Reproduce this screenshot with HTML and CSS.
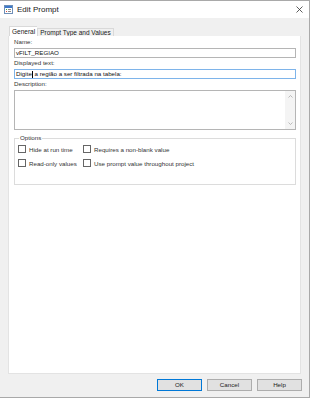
FILE: index.html
```html
<!doctype html>
<html>
<head>
<meta charset="utf-8">
<title>Edit Prompt</title>
<link rel="stylesheet" href="styles.css">
</head>
<body>
<div class="dialog">
	<div class="titlebar">
		<svg class="appicon" width="9" height="9" viewBox="0 0 9 9">
			<rect x="0.5" y="0.5" width="8" height="8" fill="#fff" stroke="#6f8fb8"/>
			<rect x="1" y="1" width="7" height="2" fill="#3d79c9"/>
			<rect x="2" y="4" width="1" height="1" fill="#3aa64a"/>
			<rect x="4" y="4" width="3" height="1" fill="#8a8a8a"/>
			<rect x="2" y="6" width="1" height="1" fill="#d9463b"/>
			<rect x="4" y="6" width="3" height="1" fill="#8a8a8a"/>
		</svg>
		<span class="title">Edit Prompt</span>
		<svg class="close" width="7" height="7" viewBox="0 0 7 7">
			<path d="M0.5 0.5L6.5 6.5M6.5 0.5L0.5 6.5" stroke="#333" stroke-width="0.8"/>
		</svg>
	</div>
	<div class="tabs">
		<span class="tab active">General</span>
		<span class="tab">Prompt Type and Values</span>
	</div>
	<div class="panel">
		<div class="label">Name:</div>
		<div class="input">vFILT_REGIAO</div>
		<div class="label">Displayed text:</div>
		<div class="input focus">Digite<i class="caret"></i> a região a ser filtrada na tabela:</div>
		<div class="label">Description:</div>
		<div class="textarea">
			<div class="area"></div>
			<div class="scroll">
				<svg width="5" height="3" viewBox="0 0 5 3"><path d="M0.5 2.5L2.5 0.5L4.5 2.5" fill="none" stroke="#a0a0a0" stroke-width="0.7"/></svg>
				<svg width="5" height="3" viewBox="0 0 5 3"><path d="M0.5 0.5L2.5 2.5L4.5 0.5" fill="none" stroke="#a0a0a0" stroke-width="0.7"/></svg>
			</div>
		</div>
		<fieldset class="group">
			<legend>Options</legend>
			<div class="checks">
				<label class="check"><i class="box"></i>Hide at run time</label>
				<label class="check"><i class="box"></i>Requires a non-blank value</label>
				<label class="check"><i class="box"></i>Read-only values</label>
				<label class="check"><i class="box"></i>Use prompt value throughout project</label>
			</div>
		</fieldset>
	</div>
	<div class="buttons">
		<span class="btn default">OK</span>
		<span class="btn">Cancel</span>
		<span class="btn">Help</span>
	</div>
</div>
</body>
</html>
```
FILE: styles.css
```css
*{ margin:0; padding:0; box-sizing:border-box;}
body{ background:#fff; font-family:"Liberation Sans", Arial, sans-serif; font-size:6.2px; color:#1a1a1a;}

.dialog{ width:310px; height:398px; border:1px solid #a9a9a9; border-left:none; background:#f0f0f0; display:flex; flex-direction:column;}

.titlebar{ height:17px; background:#fff; display:flex; align-items:center; padding:0 0 0 4px;}
.appicon{ display:block;}
.title{ font-size:8px; color:#222; margin-left:4px; flex:1;}
.close{ display:block; margin-right:6px;}

.tabs{ display:flex; align-items:flex-end; height:18px; padding-left:9px;}
.tab{ height:8px; line-height:8px; padding:0 2px; background:#f0f0f0; border:1px solid #d9d9d9; border-bottom:none; color:#1a1a1a; font-size:6.5px;}
.tab.active{ height:10px; line-height:9px; background:#fff; border-right:none;}

.panel{ flex:1; background:#fff; margin:0 8px 0 8px; padding:1px 4px 0 5px; border:1px solid #e3e3e3; border-top:none;}

.label{ height:11px; line-height:10px; color:#333;}
.input{ height:10px; line-height:8px; border:1px solid #b5b5b5; padding-left:1px; color:#111;}
.input.focus{ border-color:#7eb4ea;}
.caret{ display:inline-block; width:1px; height:7px; background:#000; vertical-align:middle;}

.textarea{ height:40px; border:1px solid #b5b5b5; display:flex;}
.area{ flex:1;}
.scroll{ width:10px; background:#f4f4f4; display:flex; flex-direction:column; justify-content:space-between; align-items:center; padding:4px 0;}
.scroll svg{ display:block;}

.group{ margin-top:4px; height:51px; border:1px solid #dcdcdc; padding:3px 0 0 3px;}
.group legend{ margin-left:1px; padding:0 1px; color:#333; line-height:8px;}
.checks{ display:grid; grid-template-columns:65px auto; row-gap:6px;}
.check{ display:flex; align-items:center; color:#333; white-space:nowrap;}
.box{ display:block; width:8px; height:8px; border:1px solid #666; background:#fff; margin-right:3px;}

.buttons{ display:flex; justify-content:flex-end; gap:5px; padding:5px 7px 0 0; height:23px;}
.btn{ width:45px; height:12px; line-height:10px; text-align:center; background:#e1e1e1; border:1px solid #adadad; color:#222;}
.btn.default{ border-color:#0078d7;}
```
